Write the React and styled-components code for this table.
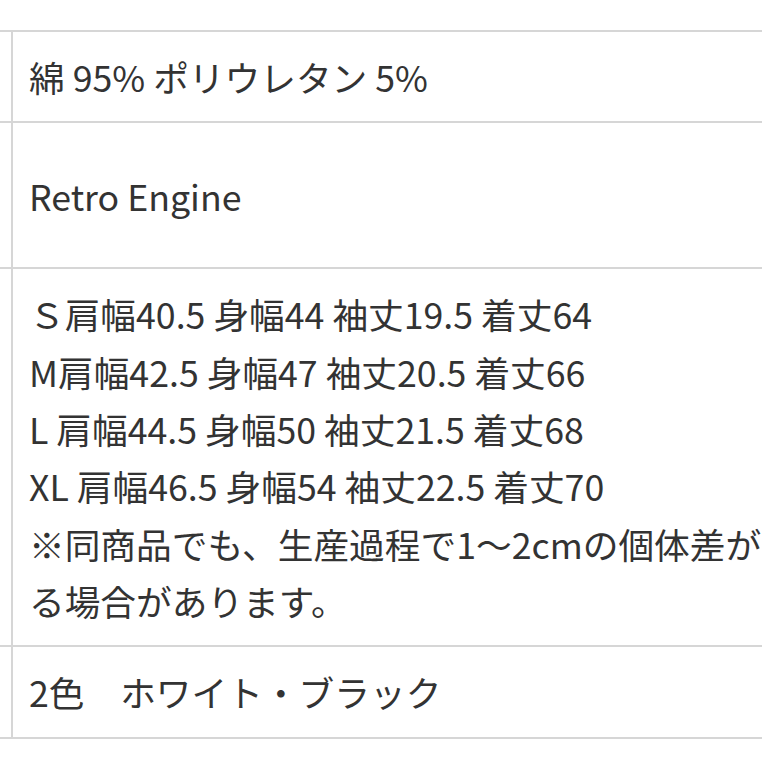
import React from 'react'
import styled, { createGlobalStyle } from 'styled-components'

const GlobalStyle = createGlobalStyle`
  html, body {
    margin: 0;
    padding: 0;
    background: #fff;
    overflow: hidden;
  }
  body {
    font-family: "Noto Sans CJK JP", "Noto Sans", sans-serif;
    color: #333;
  }
`

const Page = styled.div`
  width: 762px;
  height: 762px;
  overflow: hidden;
  padding-top: 30px;
  box-sizing: border-box;
`

const Table = styled.table`
  border-collapse: collapse;
  width: 827px;
  table-layout: fixed;
  border-top: 2px solid #d6d6d6;
  border-bottom: 2px solid #d6d6d6;
`

const HeadCell = styled.th`
  width: 11px;
  padding: 0;
  border-right: 2px solid #d6d6d6;
  border-bottom: 2px solid #d6d6d6;
`

const Cell = styled.td`
  padding: 16px;
  height: ${p => p.$h}px;
  box-sizing: border-box;
  vertical-align: middle;
  font-size: 35.7px;
  line-height: 57.3px;
  border-bottom: 2px solid #d6d6d6;
  white-space: pre-line;
`

const Next = styled.div`
  margin-top: 23px;
  border-top: 3px solid #a8a8a8;
`

const rows = [
  { h: 91, text: '綿 95% ポリウレタン 5%' },
  { h: 146, text: 'Retro Engine' },
  {
    h: 378,
    text:
      'Ｓ肩幅40.5 身幅44 袖丈19.5 着丈64\n' +
      'M肩幅42.5 身幅47 袖丈20.5 着丈66\n' +
      'L 肩幅44.5 身幅50 袖丈21.5 着丈68\n' +
      'XL 肩幅46.5 身幅54 袖丈22.5 着丈70\n' +
      '※同商品でも、生産過程で1〜2cmの個体差がある場合があります。',
  },
  { h: 89, text: '2色　ホワイト・ブラック' },
]

export default function App() {
  return (
    <>
      <GlobalStyle />
      <Page>
        <Table>
          <tbody>
            {rows.map((r, i) => (
              <tr key={i}>
                <HeadCell />
                <Cell $h={r.h}>{r.text}</Cell>
              </tr>
            ))}
          </tbody>
        </Table>
        <Next />
      </Page>
    </>
  )
}
